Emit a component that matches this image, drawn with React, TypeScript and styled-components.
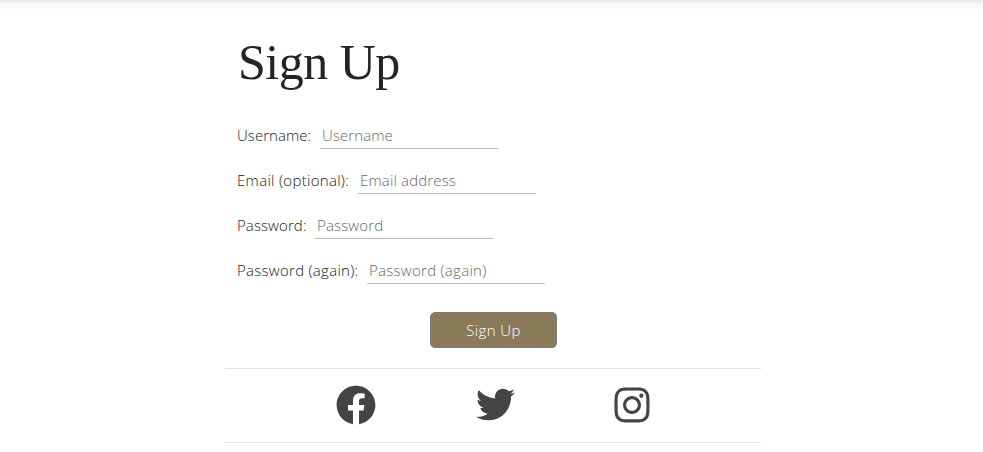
import React from "react";
import styled, { createGlobalStyle } from "styled-components";
import { FaFacebook, FaTwitter, FaInstagram } from "react-icons/fa";

const GlobalStyle = createGlobalStyle`
  *, *::before, *::after { box-sizing: border-box; }
  body {
    margin: 0;
    background: #fff;
    color: #16191c;
    font: 300 15px/24px "Open Sans", "Noto Sans", sans-serif;
    overflow: hidden;
  }
`;

const Page = styled.div`
  height: 452px;
  overflow: hidden;
`;

const HeaderShadow = styled.div`
  height: 10px;
  background: linear-gradient(#e6e6e9, #f6f6f8 40%, #fff);
`;

const Column = styled.main`
  width: 536px;
  margin-left: 225px;
`;

const Title = styled.h1`
  margin: 23px 0 0 13px;
  color: #212529;
  font: 400 50px/58px "Liberation Serif", serif;
  letter-spacing: -0.5px;
`;

const Form = styled.form`
  display: flex;
  flex-direction: column;
  padding: 31px 0 0 12px;
`;

const Field = styled.div`
  display: flex;
  height: 45px;
`;

const Label = styled.label<{ $width: number; $spacing: number }>`
  width: ${(p) => p.$width}px;
  padding-top: 1px;
  flex: none;
  white-space: nowrap;
  letter-spacing: ${(p) => p.$spacing}px;
`;

const Input = styled.input<{ $spacing: number }>`
  width: 178px;
  height: 27px;
  padding: 0 2px 1px;
  border: 0;
  border-bottom: 1px solid #bababa;
  border-radius: 0;
  outline: 0;
  background: transparent;
  font: inherit;
  letter-spacing: ${(p) => p.$spacing}px;
  &::placeholder { color: #686868; opacity: 1; }
`;

const Submit = styled.button`
  width: 127px;
  height: 36px;
  margin: 10px 0 0 193px;
  padding: 0 0 1px;
  border: 1px solid #7b7c7e;
  border-radius: 5px;
  background: #8b7a5a;
  color: #fff;
  font: inherit;
  letter-spacing: 0.4px;
`;

const Social = styled.footer`
  display: grid;
  grid-template-columns: 262px 17px 256px;
  justify-items: center;
  align-items: center;
  height: 75px;
  padding-bottom: 2px;
  margin-top: 20px;
  border: solid #e4e4e4;
  border-width: 1px 0;
  color: #444;
  font-size: 40px;
  svg { display: block; }
`;

const Bird = styled(FaTwitter)`
  font-size: 39px;
`;

const fields = [
  { name: "username", label: "Username:", hint: "Username", width: 83, ls: 0.06, hs: 0.1 },
  { name: "email", label: "Email (optional):", hint: "Email address", width: 121, ls: 0.3, hs: 0.15 },
  { name: "password", label: "Password:", hint: "Password", width: 78, ls: 0.1, hs: 0.15 },
  { name: "password2", label: "Password (again):", hint: "Password (again)", width: 130, ls: 0.28, hs: 0.28 },
];

export default function App() {
  return (
    <Page>
      <GlobalStyle />
      <HeaderShadow />
      <Column>
        <Title>Sign Up</Title>
        <Form>
          {fields.map((f) => (
            <Field key={f.name}>
              <Label htmlFor={f.name} $width={f.width} $spacing={f.ls}>{f.label}</Label>
              <Input id={f.name} placeholder={f.hint} $spacing={f.hs} />
            </Field>
          ))}
          <Submit type="button">Sign Up</Submit>
        </Form>
        <Social>
          <FaFacebook />
          <Bird />
          <FaInstagram />
        </Social>
      </Column>
    </Page>
  );
}
